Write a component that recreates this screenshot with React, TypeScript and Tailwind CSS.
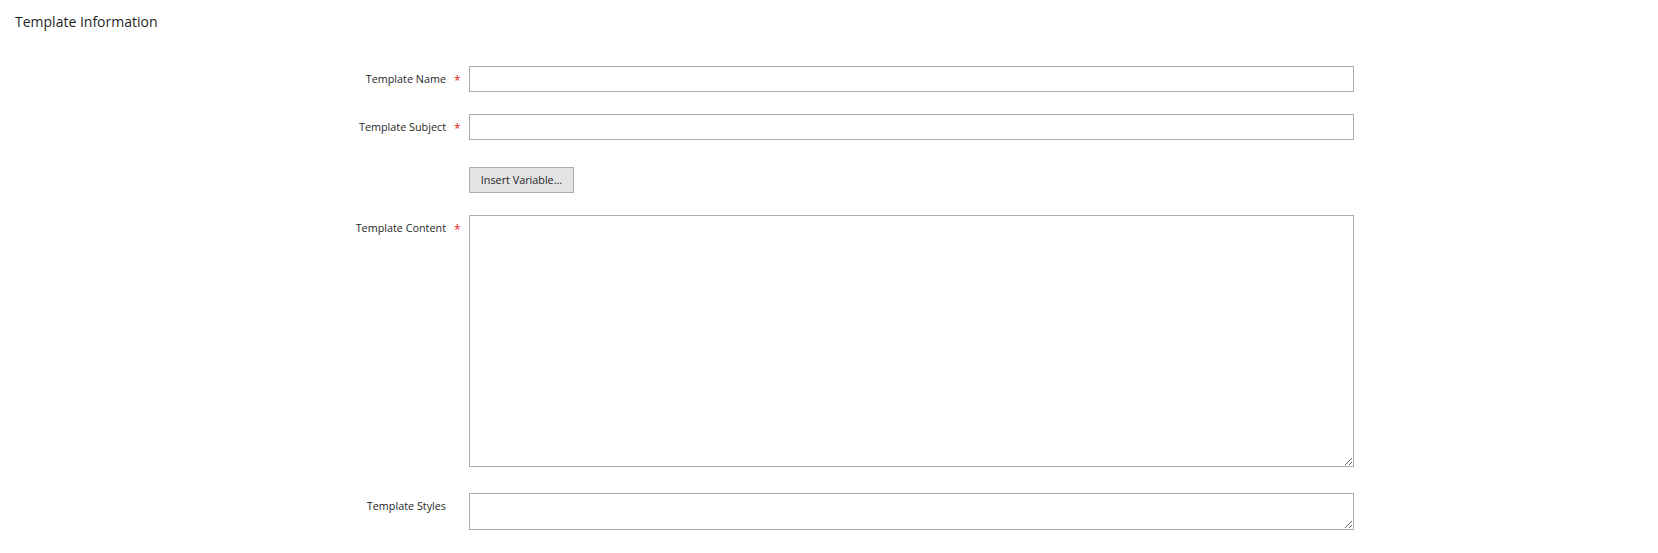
export default function App() {
  return (
    <div className="w-[1658px] h-[553px] bg-white text-[#222] font-['Open_Sans',sans-serif]">
      <h2 className="pl-[15px] pt-[12px] text-[14px] leading-[20px] text-[#1f1f1f]">Template Information</h2>

      <div className="flex flex-col mt-[34px]">
        <Row label="Template Name" required>
          <input className="w-[885px] h-[26px] border border-[#adadad] bg-white outline-none" />
        </Row>
        <Row label="Template Subject" required className="mt-[22px]">
          <input className="w-[885px] h-[26px] border border-[#adadad] bg-white outline-none" />
        </Row>
        <Row label="" className="mt-[27px]">
          <button className="h-[26px] w-[105px] border border-[#adadad] bg-[#e3e3e3] text-[10.8px] text-[#1f1f1f]">
            Insert Variable...
          </button>
        </Row>
        <Row label="Template Content" required top className="mt-[22px]">
          <textarea className="block w-[885px] h-[252px] border border-[#adadad] bg-white outline-none resize-y" />
        </Row>
        <Row label="Template Styles" top className="mt-[26px]">
          <textarea className="block w-[885px] h-[37px] border border-[#adadad] bg-white outline-none resize-y" />
        </Row>
      </div>
    </div>
  );
}

function Row({
  label,
  required,
  top,
  className = "",
  children,
}: {
  label: string;
  required?: boolean;
  top?: boolean;
  className?: string;
  children: React.ReactNode;
}) {
  return (
    <div className={`flex ${top ? "items-start" : "items-center"} ${className}`}>
      <div className={`w-[446px] text-right text-[10.8px] leading-[16px] text-[#1f1f1f] ${top ? "pt-[5px]" : ""}`}>
        {label}
      </div>
      <div className={`w-[23px] pl-[8px] flex items-center h-[16px] ${top ? "mt-[5px]" : ""}`}>
        {required && <span className="text-[#e22626] text-[12px] leading-[16px] translate-y-[2px]">*</span>}
      </div>
      {children}
    </div>
  );
}
